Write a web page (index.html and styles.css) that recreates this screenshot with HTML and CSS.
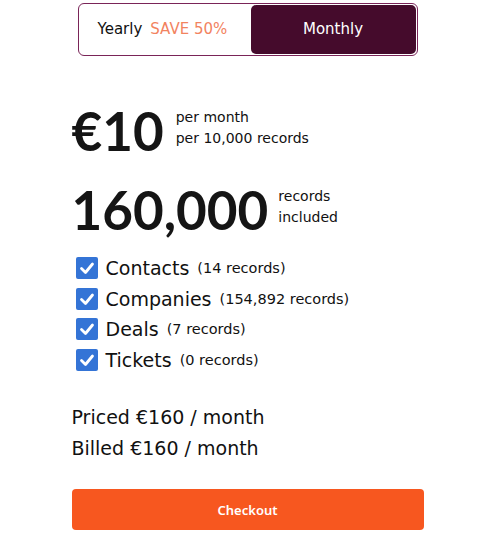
FILE: index.html
```html
<!DOCTYPE html>
<html>
<head>
<meta charset="utf-8">
<link rel="stylesheet" href="styles.css">
</head>
<body>
<div class="card">
  <div class="toggle">
    <div class="opt yearly">Yearly <span class="save">SAVE 50%</span></div>
    <div class="opt monthly">Monthly</div>
  </div>
  <div class="price">
    <div class="big">€10</div>
    <div class="side"><div>per month</div><div>per 10,000 records</div></div>
  </div>
  <div class="price records">
    <div class="big">160,000</div>
    <div class="side"><div>records</div><div>included</div></div>
  </div>
  <ul class="list">
    <li><span class="cb"><svg viewBox="0 0 22 22"><path d="M5.5 11.5l4 4 7-8.5" fill="none" stroke="#fff" stroke-width="2.8" stroke-linecap="round" stroke-linejoin="round"/></svg></span><span class="name">Contacts</span><span class="count">(14 records)</span></li>
    <li><span class="cb"><svg viewBox="0 0 22 22"><path d="M5.5 11.5l4 4 7-8.5" fill="none" stroke="#fff" stroke-width="2.8" stroke-linecap="round" stroke-linejoin="round"/></svg></span><span class="name">Companies</span><span class="count">(154,892 records)</span></li>
    <li><span class="cb"><svg viewBox="0 0 22 22"><path d="M5.5 11.5l4 4 7-8.5" fill="none" stroke="#fff" stroke-width="2.8" stroke-linecap="round" stroke-linejoin="round"/></svg></span><span class="name">Deals</span><span class="count">(7 records)</span></li>
    <li><span class="cb"><svg viewBox="0 0 22 22"><path d="M5.5 11.5l4 4 7-8.5" fill="none" stroke="#fff" stroke-width="2.8" stroke-linecap="round" stroke-linejoin="round"/></svg></span><span class="name">Tickets</span><span class="count">(0 records)</span></li>
  </ul>
  <div class="totals">
    <div>Priced €160 / month</div>
    <div>Billed €160 / month</div>
  </div>
  <button class="checkout">Checkout</button>
</div>
</body>
</html>
```
FILE: styles.css
```css
* { box-sizing: border-box; }
body {
  margin: 0;
  background: #fff;
  font-family: "DejaVu Sans", "Noto Sans", sans-serif;
  color: #111;
}
.card {
  width: 352px;
  margin: 0 auto;
  padding-top: 3px;
}
.toggle {
  width: 340px;
  height: 53px;
  margin-left: 6px;
  border: 1px solid #7a2458;
  border-radius: 6px;
  padding: 1px;
  display: flex;
}
.opt {
  flex: 1;
  display: flex;
  align-items: center;
  justify-content: center;
  font-size: 15px;
  border-radius: 5px;
  padding-bottom: 2px;
}
.yearly { justify-content: flex-start; padding-left: 18px; }
.save { color: #f2835f; margin-left: 8px; }
.monthly {
  background: #450b2c;
  color: #fff;
  flex: 0 0 165px;
}
.price {
  display: flex;
  align-items: center;
  margin-top: 45px;
}
.big {
  font-family: "Lato", sans-serif;
  font-weight: 700;
  font-size: 53px;
  line-height: 60px;
  color: #151515;
}
.side {
  font-size: 14px;
  line-height: 21px;
  margin-left: 12px;
  margin-top: -6px;
}
.records { margin-top: 19px; }
.records .side { margin-left: 10px; }
.list {
  list-style: none;
  margin: 13px 0 0;
  padding: 0 0 0 4px;
}
.list li {
  display: flex;
  align-items: center;
  height: 30.5px;
}
.cb {
  width: 22px;
  height: 22px;
  background: #3474d6;
  border-radius: 2px;
  display: flex;
}
.cb svg { width: 22px; height: 22px; }
.name { font-size: 19px; margin-left: 8px; }
.count { font-size: 14.5px; margin-left: 8px; }
.totals {
  margin-top: 27px;
  font-size: 19px;
  line-height: 31px;
}
.checkout {
  display: block;
  width: 352px;
  height: 41px;
  margin-top: 25px;
  border: 0;
  border-radius: 4px;
  background: #f7571f;
  color: #fff;
  font-family: "Noto Sans", sans-serif;
  font-size: 13px;
  font-weight: 600;
}
```
